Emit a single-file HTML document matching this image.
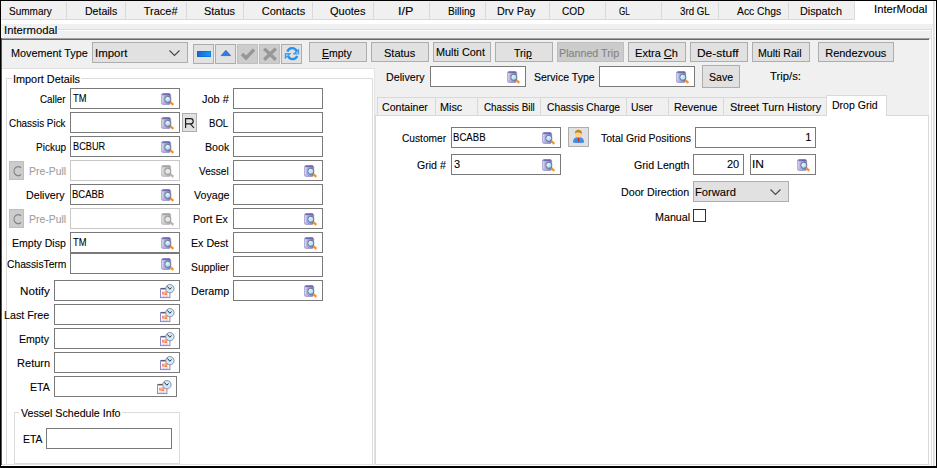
<!DOCTYPE html>
<html><head><meta charset="utf-8"><title>Intermodal</title>
<style>
html,body{margin:0;padding:0;}
body{width:937px;height:468px;overflow:hidden;background:#f0f0f0;position:relative;font-family:"Liberation Sans",sans-serif;font-size:11px;}
div,span.t,svg{position:absolute;}
span.t{white-space:nowrap;line-height:14px;height:14px;transform-origin:0 0;-webkit-text-stroke:0.1px currentColor;}
u{text-decoration:underline;}
</style></head><body>
<svg width="0" height="0" style="left:0;top:0"><defs><linearGradient id="cy" x1="0" x2="1" y1="0" y2="0"><stop offset="0" stop-color="#cacaf0"/><stop offset="0.45" stop-color="#a2a2dc"/><stop offset="1" stop-color="#7a7abe"/></linearGradient><linearGradient id="cyd" x1="0" x2="1" y1="0" y2="0"><stop offset="0" stop-color="#d6d6d6"/><stop offset="0.45" stop-color="#c2c2c2"/><stop offset="1" stop-color="#a8a8a8"/></linearGradient><radialGradient id="ln" cx="0.35" cy="0.3" r="0.8"><stop offset="0" stop-color="#e4f6ff"/><stop offset="1" stop-color="#8ed2f6"/></radialGradient></defs></svg>
<div style="left:0px;top:0px;width:937px;height:468px;background:#f0f0f0;"></div>
<div style="left:66px;top:2px;width:1px;height:18px;background:#d9d9d9;"></div>
<div style="left:125px;top:2px;width:1px;height:18px;background:#d9d9d9;"></div>
<div style="left:186px;top:2px;width:1px;height:18px;background:#d9d9d9;"></div>
<div style="left:243px;top:2px;width:1px;height:18px;background:#d9d9d9;"></div>
<div style="left:312px;top:2px;width:1px;height:18px;background:#d9d9d9;"></div>
<div style="left:373px;top:2px;width:1px;height:18px;background:#d9d9d9;"></div>
<div style="left:429px;top:2px;width:1px;height:18px;background:#d9d9d9;"></div>
<div style="left:485px;top:2px;width:1px;height:18px;background:#d9d9d9;"></div>
<div style="left:549px;top:2px;width:1px;height:18px;background:#d9d9d9;"></div>
<div style="left:605px;top:2px;width:1px;height:18px;background:#d9d9d9;"></div>
<div style="left:661px;top:2px;width:1px;height:18px;background:#d9d9d9;"></div>
<div style="left:718px;top:2px;width:1px;height:18px;background:#d9d9d9;"></div>
<div style="left:788px;top:2px;width:1px;height:18px;background:#d9d9d9;"></div>
<div style="left:1px;top:19px;width:854px;height:1px;background:#d9d9d9;"></div>
<div style="left:1px;top:20px;width:934px;height:4px;background:#ffffff;"></div>
<div style="left:855px;top:1px;width:78px;height:23px;background:#ffffff;"></div>
<div style="left:854px;top:2px;width:1px;height:18px;background:#d9d9d9;"></div>
<div style="left:933px;top:1px;width:1px;height:465px;background:#dcdcdc;"></div>
<div style="left:934px;top:1px;width:1px;height:465px;background:#e6e6e6;"></div>
<div style="left:935px;top:1px;width:1px;height:465px;background:#ffffff;"></div>
<span class="t" style="left:8.75px;top:4px;color:#000;font-size:11px;transform:scaleX(0.9108);">Summary</span>
<span class="t" style="left:84.75px;top:4px;color:#000;font-size:11px;transform:scaleX(0.9576);">Details</span>
<span class="t" style="left:143.75px;top:4px;color:#000;font-size:11px;">Trace#</span>
<span class="t" style="left:203.65px;top:4px;color:#000;font-size:11px;transform:scaleX(0.9949);">Status</span>
<span class="t" style="left:261.75px;top:4px;color:#000;font-size:11px;">Contacts</span>
<span class="t" style="left:330px;top:4px;color:#000;font-size:11px;">Quotes</span>
<span class="t" style="left:398.3px;top:4px;color:#000;font-size:11px;transform:scaleX(1.145);">I/P</span>
<span class="t" style="left:448.05px;top:4px;color:#000;font-size:11px;transform:scaleX(0.9289);">Billing</span>
<span class="t" style="left:497.05px;top:4px;color:#000;font-size:11px;transform:scaleX(0.9795);">Drv Pay</span>
<span class="t" style="left:562.1px;top:4px;color:#000;font-size:11px;transform:scaleX(0.9167);">COD</span>
<span class="t" style="left:619px;top:4px;color:#000;font-size:11px;transform:scaleX(0.7343);">GL</span>
<span class="t" style="left:680px;top:4px;color:#000;font-size:11px;transform:scaleX(0.8825);">3rd GL</span>
<span class="t" style="left:737px;top:4px;color:#000;font-size:11px;transform:scaleX(0.9404);">Acc Chgs</span>
<span class="t" style="left:800.2px;top:4px;color:#000;font-size:11px;transform:scaleX(0.981);">Dispatch</span>
<span class="t" style="left:874.3px;top:2px;color:#000;font-size:11px;transform:scaleX(1.024);">InterModal</span>
<div style="left:3px;top:29px;width:928px;height:1px;background:#dcdcdc;"></div>
<div style="left:3px;top:30px;width:928px;height:1px;background:#ffffff;"></div>
<div style="left:931px;top:29px;width:1px;height:436px;background:#dcdcdc;"></div>
<div style="left:932px;top:29px;width:1px;height:436px;background:#ffffff;"></div>
<div style="left:4px;top:24px;width:54px;height:12px;background:#f0f0f0;"></div>
<span class="t" style="left:4.3px;top:23px;color:#000;font-size:11px;transform:scaleX(1.024);">Intermodal</span>
<div style="left:1px;top:38px;width:929px;height:1px;background:#a0a0a0;"></div>
<div style="left:1px;top:39px;width:928px;height:1px;background:#696969;"></div>
<div style="left:1px;top:38px;width:1px;height:428px;background:#555555;"></div>
<div style="left:929px;top:39px;width:1px;height:426px;background:#ffffff;"></div>
<div style="left:930px;top:38px;width:1px;height:427px;background:#ffffff;"></div>
<div style="left:2px;top:464px;width:928px;height:1px;background:#e3e3e3;"></div>
<div style="left:1px;top:465px;width:930px;height:1px;background:#ffffff;"></div>
<span class="t" style="left:10.8px;top:46px;color:#000;font-size:11px;transform:scaleX(0.9836);">Movement Type</span>
<div style="left:92px;top:42px;width:96px;height:21px;background:#e1e1e1;border:1px solid #adadad;box-sizing:border-box;"></div>
<span class="t" style="left:95.2px;top:46px;color:#000;font-size:11px;transform:scaleX(1.04);">Import</span>
<svg style="left:168px;top:49px" width="13" height="8" viewBox="0 0 13 8"><path d="M1.5 1.5 L6.5 6.5 L11.5 1.5" fill="none" stroke="#444" stroke-width="1.1"/></svg>
<div style="left:193px;top:44px;width:21px;height:20px;background:#e1e1e1;border:1px solid #adadad;box-sizing:border-box;"></div>
<div style="left:215px;top:44px;width:21px;height:20px;background:#e1e1e1;border:1px solid #adadad;box-sizing:border-box;"></div>
<div style="left:237px;top:44px;width:21px;height:20px;background:#cccccc;border:1px solid #bfbfbf;box-sizing:border-box;"></div>
<div style="left:259px;top:44px;width:21px;height:20px;background:#cccccc;border:1px solid #bfbfbf;box-sizing:border-box;"></div>
<div style="left:281px;top:44px;width:21px;height:20px;background:#e1e1e1;border:1px solid #adadad;box-sizing:border-box;"></div>
<svg style="left:197px;top:51px" width="14" height="6" viewBox="0 0 14 6"><defs><linearGradient id="g1" x1="0" x2="1" y1="0" y2="0"><stop offset="0" stop-color="#1f5fd2"/><stop offset="1" stop-color="#0aa0ff"/></linearGradient></defs><rect x="0" y="0" width="14" height="6" rx="1" fill="url(#g1)" stroke="#1b50b8" stroke-width="0.8"/></svg>
<svg style="left:220px;top:49px" width="12" height="8" viewBox="0 0 12 8"><path d="M5.9 1.3 L10.6 6.6 L1.2 6.6 Z" fill="#2f7fe8" stroke="#1f58c8" stroke-width="0.7"/></svg>
<svg style="left:240px;top:47px" width="16" height="14" viewBox="0 0 16 14"><path d="M2 7 L6 11 L14 2.6" fill="none" stroke="#979797" stroke-width="3.5"/></svg>
<svg style="left:262px;top:47px" width="16" height="14" viewBox="0 0 16 14"><path d="M2.2 1.6 L13.8 12.8 M13.8 1.6 L2.2 12.8" fill="none" stroke="#979797" stroke-width="3.4"/></svg>
<svg style="left:284px;top:46px" width="16" height="16" viewBox="0 0 16 16"><path d="M3.4 5.6 A4.9 4.9 0 0 1 12.6 5.2" fill="none" stroke="#2290f4" stroke-width="2.3"/><path d="M14.7 3.2 L14.7 8.1 L9.2 8.1 Z" fill="#3aa0fa" stroke="#1d84ec" stroke-width="0.6"/><path d="M13.6 5.6 L13.6 7.4 L11.6 7.4 Z" fill="#bfe3ff"/><path d="M4.2 10.2 A4.9 4.9 0 0 0 13.2 10" fill="none" stroke="#2290f4" stroke-width="2.3"/><path d="M1.2 7.5 L1.2 12.6 L6.8 7.5 Z" fill="#3aa0fa" stroke="#1d84ec" stroke-width="0.6"/><path d="M2.2 8.4 L2.2 10.4 L4.4 8.4 Z" fill="#bfe3ff"/></svg>
<div style="left:309px;top:42px;width:58px;height:20px;background:#e1e1e1;border:1px solid #adadad;box-sizing:border-box;"></div>
<span class="t" style="left:322.1px;top:46px;color:#000;font-size:11px;transform:scaleX(0.95);"><u>E</u>mpty</span>
<div style="left:371px;top:42px;width:58px;height:20px;background:#e1e1e1;border:1px solid #adadad;box-sizing:border-box;"></div>
<span class="t" style="left:384px;top:46px;color:#000;font-size:11px;">Status</span>
<div style="left:433px;top:42px;width:58px;height:20px;background:#e1e1e1;border:1px solid #adadad;box-sizing:border-box;"></div>
<span class="t" style="left:436.3px;top:45px;color:#000;font-size:11px;transform:scaleX(0.9878);">Multi Cont</span>
<div style="left:495px;top:42px;width:58px;height:20px;background:#e1e1e1;border:1px solid #adadad;box-sizing:border-box;"></div>
<span class="t" style="left:514.1px;top:46px;color:#000;font-size:11px;transform:scaleX(0.9579);">Tri<u>p</u></span>
<div style="left:557px;top:42px;width:67px;height:20px;background:#cccccc;border:1px solid #bfbfbf;box-sizing:border-box;"></div>
<span class="t" style="left:559.3px;top:46px;color:#838383;font-size:11px;transform:scaleX(0.9738);">Planned Trip</span>
<div style="left:628px;top:42px;width:58px;height:20px;background:#e1e1e1;border:1px solid #adadad;box-sizing:border-box;"></div>
<span class="t" style="left:635.1px;top:46px;color:#000;font-size:11px;">Extra <u>C</u>h</span>
<div style="left:690px;top:42px;width:58px;height:20px;background:#e1e1e1;border:1px solid #adadad;box-sizing:border-box;"></div>
<span class="t" style="left:697.2px;top:46px;color:#000;font-size:11px;transform:scaleX(1.0845);">De-stuff</span>
<div style="left:752px;top:42px;width:58px;height:20px;background:#e1e1e1;border:1px solid #adadad;box-sizing:border-box;"></div>
<span class="t" style="left:758.2px;top:46px;color:#000;font-size:11px;transform:scaleX(0.9636);">Multi Rail</span>
<div style="left:818px;top:42px;width:76px;height:20px;background:#e1e1e1;border:1px solid #adadad;box-sizing:border-box;"></div>
<span class="t" style="left:825.2px;top:46px;color:#000;font-size:11px;">Rendezvous</span>
<span class="t" style="left:386.3px;top:70px;color:#000;font-size:11px;transform:scaleX(0.97);">Delivery</span>
<div style="left:430px;top:66px;width:96px;height:21px;background:#fff;border:1px solid #7a7a7a;box-sizing:border-box;"></div>
<svg style="left:507px;top:71px" width="14" height="14" viewBox="0 0 14 14"><rect x="0.4" y="0.5" width="9.3" height="11" rx="1.7" fill="url(#cy)" stroke="#8484c4" stroke-width="0.6"/><rect x="1.2" y="0.5" width="7.8" height="1.5" rx="0.7" fill="#5a5aa4" opacity="0.75"/><path d="M0.9 3.4h1.4M0.9 5.6h1.4M0.9 7.8h1.4" stroke="#fff" stroke-width="0.7" opacity="0.7"/><line x1="9.6" y1="9.2" x2="12.3" y2="11.9" stroke="#ff9020" stroke-width="2.3"/><circle cx="6.8" cy="6.3" r="3.05" fill="url(#ln)" stroke="#686874" stroke-width="0.85"/></svg>
<span class="t" style="left:533.75px;top:70px;color:#000;font-size:11px;transform:scaleX(0.9557);">Service Type</span>
<div style="left:599px;top:66px;width:96px;height:21px;background:#fff;border:1px solid #7a7a7a;box-sizing:border-box;"></div>
<svg style="left:676px;top:71px" width="14" height="14" viewBox="0 0 14 14"><rect x="0.4" y="0.5" width="9.3" height="11" rx="1.7" fill="url(#cy)" stroke="#8484c4" stroke-width="0.6"/><rect x="1.2" y="0.5" width="7.8" height="1.5" rx="0.7" fill="#5a5aa4" opacity="0.75"/><path d="M0.9 3.4h1.4M0.9 5.6h1.4M0.9 7.8h1.4" stroke="#fff" stroke-width="0.7" opacity="0.7"/><line x1="9.6" y1="9.2" x2="12.3" y2="11.9" stroke="#ff9020" stroke-width="2.3"/><circle cx="6.8" cy="6.3" r="3.05" fill="url(#ln)" stroke="#686874" stroke-width="0.85"/></svg>
<div style="left:702px;top:65px;width:38px;height:23px;background:#e1e1e1;border:1px solid #adadad;box-sizing:border-box;"></div>
<span class="t" style="left:708.75px;top:70px;color:#000;font-size:11px;transform:scaleX(0.96);">Save</span>
<span class="t" style="left:770px;top:69px;color:#000;font-size:11px;transform:scaleX(1.0276);">Trip/s:</span>
<div style="left:2px;top:68px;width:373px;height:396px;background:#ffffff;"></div>
<div style="left:2px;top:68px;width:373px;height:1px;background:#e0e0e0;"></div>
<div style="left:374px;top:68px;width:1px;height:396px;background:#e3e3e3;"></div>
<div style="left:6px;top:78px;width:367px;height:386px;border:1px solid #dcdcdc;box-sizing:border-box;border-bottom:none;"></div>
<div style="left:12px;top:72px;width:69px;height:12px;background:#ffffff;"></div>
<span class="t" style="left:13.2px;top:72px;color:#000;font-size:11px;transform:scaleX(0.9881);">Import Details</span>
<span class="t" style="left:40px;top:92px;color:#000;font-size:11px;transform:scaleX(0.89);">Caller</span>
<div style="left:70px;top:88px;width:110px;height:21px;background:#fff;border:1px solid #7a7a7a;box-sizing:border-box;"></div>
<svg style="left:161px;top:93px" width="14" height="14" viewBox="0 0 14 14"><rect x="0.4" y="0.5" width="9.3" height="11" rx="1.7" fill="url(#cy)" stroke="#8484c4" stroke-width="0.6"/><rect x="1.2" y="0.5" width="7.8" height="1.5" rx="0.7" fill="#5a5aa4" opacity="0.75"/><path d="M0.9 3.4h1.4M0.9 5.6h1.4M0.9 7.8h1.4" stroke="#fff" stroke-width="0.7" opacity="0.7"/><line x1="9.6" y1="9.2" x2="12.3" y2="11.9" stroke="#ff9020" stroke-width="2.3"/><circle cx="6.8" cy="6.3" r="3.05" fill="url(#ln)" stroke="#686874" stroke-width="0.85"/></svg>
<span class="t" style="left:73.0px;top:91px;color:#000;font-size:11px;transform:scaleX(0.8495);">TM</span>
<span class="t" style="left:9.1px;top:116px;color:#000;font-size:11px;transform:scaleX(0.8975);">Chassis Pick</span>
<div style="left:70px;top:112px;width:110px;height:21px;background:#fff;border:1px solid #7a7a7a;box-sizing:border-box;"></div>
<svg style="left:161px;top:117px" width="14" height="14" viewBox="0 0 14 14"><rect x="0.4" y="0.5" width="9.3" height="11" rx="1.7" fill="url(#cy)" stroke="#8484c4" stroke-width="0.6"/><rect x="1.2" y="0.5" width="7.8" height="1.5" rx="0.7" fill="#5a5aa4" opacity="0.75"/><path d="M0.9 3.4h1.4M0.9 5.6h1.4M0.9 7.8h1.4" stroke="#fff" stroke-width="0.7" opacity="0.7"/><line x1="9.6" y1="9.2" x2="12.3" y2="11.9" stroke="#ff9020" stroke-width="2.3"/><circle cx="6.8" cy="6.3" r="3.05" fill="url(#ln)" stroke="#686874" stroke-width="0.85"/></svg>
<span class="t" style="left:35.66px;top:140px;color:#000;font-size:11px;transform:scaleX(0.9103);">Pickup</span>
<div style="left:70px;top:136px;width:110px;height:21px;background:#fff;border:1px solid #7a7a7a;box-sizing:border-box;"></div>
<svg style="left:161px;top:141px" width="14" height="14" viewBox="0 0 14 14"><rect x="0.4" y="0.5" width="9.3" height="11" rx="1.7" fill="url(#cy)" stroke="#8484c4" stroke-width="0.6"/><rect x="1.2" y="0.5" width="7.8" height="1.5" rx="0.7" fill="#5a5aa4" opacity="0.75"/><path d="M0.9 3.4h1.4M0.9 5.6h1.4M0.9 7.8h1.4" stroke="#fff" stroke-width="0.7" opacity="0.7"/><line x1="9.6" y1="9.2" x2="12.3" y2="11.9" stroke="#ff9020" stroke-width="2.3"/><circle cx="6.8" cy="6.3" r="3.05" fill="url(#ln)" stroke="#686874" stroke-width="0.85"/></svg>
<span class="t" style="left:73.0px;top:139px;color:#000;font-size:11px;transform:scaleX(0.8358);">BCBUR</span>
<span class="t" style="left:29.3px;top:164px;color:#a0a0a0;font-size:11px;transform:scaleX(0.9474);">Pre-Pull</span>
<div style="left:70px;top:160px;width:110px;height:21px;background:#fff;border:1px solid #c8c8c8;box-sizing:border-box;"></div>
<svg style="left:161px;top:165px" width="14" height="14" viewBox="0 0 14 14"><rect x="0.4" y="0.5" width="9.3" height="11" rx="1.7" fill="url(#cyd)" stroke="#b0b0b0" stroke-width="0.6"/><rect x="1.2" y="0.5" width="7.8" height="1.5" rx="0.7" fill="#9c9c9c" opacity="0.75"/><path d="M0.9 3.4h1.4M0.9 5.6h1.4M0.9 7.8h1.4" stroke="#fff" stroke-width="0.7" opacity="0.7"/><line x1="9.6" y1="9.2" x2="12.3" y2="11.9" stroke="#b4b4b4" stroke-width="2.3"/><circle cx="6.8" cy="6.3" r="3.05" fill="#e9e9e9" stroke="#8a8a8a" stroke-width="0.85"/></svg>
<div style="left:9px;top:161px;width:15px;height:19px;background:#cccccc;border:1px solid #bfbfbf;box-sizing:border-box;"></div>
<svg style="left:12px;top:165px" width="11" height="12" viewBox="0 0 11 12"><path d="M9 2.9 A4.1 4.6 0 1 0 9 9.5" fill="none" stroke="#808080" stroke-width="1.15"/></svg>
<span class="t" style="left:26.3px;top:188px;color:#000;font-size:11px;transform:scaleX(0.97);">Delivery</span>
<div style="left:70px;top:184px;width:110px;height:21px;background:#fff;border:1px solid #7a7a7a;box-sizing:border-box;"></div>
<svg style="left:161px;top:189px" width="14" height="14" viewBox="0 0 14 14"><rect x="0.4" y="0.5" width="9.3" height="11" rx="1.7" fill="url(#cy)" stroke="#8484c4" stroke-width="0.6"/><rect x="1.2" y="0.5" width="7.8" height="1.5" rx="0.7" fill="#5a5aa4" opacity="0.75"/><path d="M0.9 3.4h1.4M0.9 5.6h1.4M0.9 7.8h1.4" stroke="#fff" stroke-width="0.7" opacity="0.7"/><line x1="9.6" y1="9.2" x2="12.3" y2="11.9" stroke="#ff9020" stroke-width="2.3"/><circle cx="6.8" cy="6.3" r="3.05" fill="url(#ln)" stroke="#686874" stroke-width="0.85"/></svg>
<span class="t" style="left:72.2px;top:187px;color:#000;font-size:11px;transform:scaleX(0.8611);">BCABB</span>
<span class="t" style="left:29.3px;top:212px;color:#a0a0a0;font-size:11px;transform:scaleX(0.9474);">Pre-Pull</span>
<div style="left:70px;top:208px;width:110px;height:21px;background:#fff;border:1px solid #c8c8c8;box-sizing:border-box;"></div>
<svg style="left:161px;top:213px" width="14" height="14" viewBox="0 0 14 14"><rect x="0.4" y="0.5" width="9.3" height="11" rx="1.7" fill="url(#cyd)" stroke="#b0b0b0" stroke-width="0.6"/><rect x="1.2" y="0.5" width="7.8" height="1.5" rx="0.7" fill="#9c9c9c" opacity="0.75"/><path d="M0.9 3.4h1.4M0.9 5.6h1.4M0.9 7.8h1.4" stroke="#fff" stroke-width="0.7" opacity="0.7"/><line x1="9.6" y1="9.2" x2="12.3" y2="11.9" stroke="#b4b4b4" stroke-width="2.3"/><circle cx="6.8" cy="6.3" r="3.05" fill="#e9e9e9" stroke="#8a8a8a" stroke-width="0.85"/></svg>
<div style="left:9px;top:209px;width:15px;height:19px;background:#cccccc;border:1px solid #bfbfbf;box-sizing:border-box;"></div>
<svg style="left:12px;top:213px" width="11" height="12" viewBox="0 0 11 12"><path d="M9 2.9 A4.1 4.6 0 1 0 9 9.5" fill="none" stroke="#808080" stroke-width="1.15"/></svg>
<span class="t" style="left:12.2px;top:236px;color:#000;font-size:11px;transform:scaleX(0.9565);">Empty Disp</span>
<div style="left:70px;top:232px;width:110px;height:21px;background:#fff;border:1px solid #7a7a7a;box-sizing:border-box;"></div>
<svg style="left:161px;top:237px" width="14" height="14" viewBox="0 0 14 14"><rect x="0.4" y="0.5" width="9.3" height="11" rx="1.7" fill="url(#cy)" stroke="#8484c4" stroke-width="0.6"/><rect x="1.2" y="0.5" width="7.8" height="1.5" rx="0.7" fill="#5a5aa4" opacity="0.75"/><path d="M0.9 3.4h1.4M0.9 5.6h1.4M0.9 7.8h1.4" stroke="#fff" stroke-width="0.7" opacity="0.7"/><line x1="9.6" y1="9.2" x2="12.3" y2="11.9" stroke="#ff9020" stroke-width="2.3"/><circle cx="6.8" cy="6.3" r="3.05" fill="url(#ln)" stroke="#686874" stroke-width="0.85"/></svg>
<span class="t" style="left:73.0px;top:235px;color:#000;font-size:11px;transform:scaleX(0.8495);">TM</span>
<span class="t" style="left:6.75px;top:257px;color:#000;font-size:11px;transform:scaleX(0.9335);">ChassisTerm</span>
<div style="left:70px;top:253px;width:110px;height:21px;background:#fff;border:1px solid #7a7a7a;box-sizing:border-box;"></div>
<svg style="left:161px;top:258px" width="14" height="14" viewBox="0 0 14 14"><rect x="0.4" y="0.5" width="9.3" height="11" rx="1.7" fill="url(#cy)" stroke="#8484c4" stroke-width="0.6"/><rect x="1.2" y="0.5" width="7.8" height="1.5" rx="0.7" fill="#5a5aa4" opacity="0.75"/><path d="M0.9 3.4h1.4M0.9 5.6h1.4M0.9 7.8h1.4" stroke="#fff" stroke-width="0.7" opacity="0.7"/><line x1="9.6" y1="9.2" x2="12.3" y2="11.9" stroke="#ff9020" stroke-width="2.3"/><circle cx="6.8" cy="6.3" r="3.05" fill="url(#ln)" stroke="#686874" stroke-width="0.85"/></svg>
<div style="left:182px;top:113px;width:15px;height:19px;background:#e1e1e1;border:1px solid #adadad;box-sizing:border-box;"></div>
<svg style="left:184px;top:117px" width="12" height="12" viewBox="0 0 12 12"><path d="M1.6 11 V1.6 H6.6 A2.6 2.6 0 0 1 6.6 6.8 H1.6 M6.4 6.8 L10 11" fill="none" stroke="#1a1a1a" stroke-width="1.15"/></svg>
<span class="t" style="left:20.2px;top:284px;color:#000;font-size:11px;transform:scaleX(1.0593);">Notify</span>
<div style="left:54px;top:280px;width:126px;height:21px;background:#fff;border:1px solid #7a7a7a;box-sizing:border-box;"></div>
<svg style="left:160px;top:283px" width="15" height="16" viewBox="0 0 15 16"><rect x="0.5" y="5.6" width="9.4" height="9" fill="#ffffff" stroke="#8c88cc" stroke-width="1"/><rect x="1.2" y="4.9" width="5" height="1.5" fill="#5a5a60"/><rect x="2.3" y="8.6" width="1.3" height="3" fill="#ff5a20"/><path d="M4.4 8.9h2.6v1.3h-2.4v1.3h2.8" fill="none" stroke="#ff6a30" stroke-width="0.9"/><rect x="1.6" y="12.7" width="7" height="0.9" fill="#bcbce6"/><circle cx="9.9" cy="5.7" r="4.2" fill="#cdeafb" stroke="#8a8698" stroke-width="0.9"/><path d="M7.3 3.4 L9.8 6.2 L11.5 4.5" fill="none" stroke="#2a2a30" stroke-width="0.95"/></svg>
<span class="t" style="left:4.3px;top:308px;color:#000;font-size:11px;transform:scaleX(0.9739);">Last Free</span>
<div style="left:54px;top:304px;width:126px;height:21px;background:#fff;border:1px solid #7a7a7a;box-sizing:border-box;"></div>
<svg style="left:160px;top:307px" width="15" height="16" viewBox="0 0 15 16"><rect x="0.5" y="5.6" width="9.4" height="9" fill="#ffffff" stroke="#8c88cc" stroke-width="1"/><rect x="1.2" y="4.9" width="5" height="1.5" fill="#5a5a60"/><rect x="2.3" y="8.6" width="1.3" height="3" fill="#ff5a20"/><path d="M4.4 8.9h2.6v1.3h-2.4v1.3h2.8" fill="none" stroke="#ff6a30" stroke-width="0.9"/><rect x="1.6" y="12.7" width="7" height="0.9" fill="#bcbce6"/><circle cx="9.9" cy="5.7" r="4.2" fill="#cdeafb" stroke="#8a8698" stroke-width="0.9"/><path d="M7.3 3.4 L9.8 6.2 L11.5 4.5" fill="none" stroke="#2a2a30" stroke-width="0.95"/></svg>
<span class="t" style="left:19.3px;top:332px;color:#000;font-size:11px;transform:scaleX(0.9613);">Empty</span>
<div style="left:54px;top:328px;width:126px;height:21px;background:#fff;border:1px solid #7a7a7a;box-sizing:border-box;"></div>
<svg style="left:160px;top:331px" width="15" height="16" viewBox="0 0 15 16"><rect x="0.5" y="5.6" width="9.4" height="9" fill="#ffffff" stroke="#8c88cc" stroke-width="1"/><rect x="1.2" y="4.9" width="5" height="1.5" fill="#5a5a60"/><rect x="2.3" y="8.6" width="1.3" height="3" fill="#ff5a20"/><path d="M4.4 8.9h2.6v1.3h-2.4v1.3h2.8" fill="none" stroke="#ff6a30" stroke-width="0.9"/><rect x="1.6" y="12.7" width="7" height="0.9" fill="#bcbce6"/><circle cx="9.9" cy="5.7" r="4.2" fill="#cdeafb" stroke="#8a8698" stroke-width="0.9"/><path d="M7.3 3.4 L9.8 6.2 L11.5 4.5" fill="none" stroke="#2a2a30" stroke-width="0.95"/></svg>
<span class="t" style="left:17.1px;top:356px;color:#000;font-size:11px;">Return</span>
<div style="left:54px;top:352px;width:126px;height:21px;background:#fff;border:1px solid #7a7a7a;box-sizing:border-box;"></div>
<svg style="left:160px;top:355px" width="15" height="16" viewBox="0 0 15 16"><rect x="0.5" y="5.6" width="9.4" height="9" fill="#ffffff" stroke="#8c88cc" stroke-width="1"/><rect x="1.2" y="4.9" width="5" height="1.5" fill="#5a5a60"/><rect x="2.3" y="8.6" width="1.3" height="3" fill="#ff5a20"/><path d="M4.4 8.9h2.6v1.3h-2.4v1.3h2.8" fill="none" stroke="#ff6a30" stroke-width="0.9"/><rect x="1.6" y="12.7" width="7" height="0.9" fill="#bcbce6"/><circle cx="9.9" cy="5.7" r="4.2" fill="#cdeafb" stroke="#8a8698" stroke-width="0.9"/><path d="M7.3 3.4 L9.8 6.2 L11.5 4.5" fill="none" stroke="#2a2a30" stroke-width="0.95"/></svg>
<span class="t" style="left:30.2px;top:380px;color:#000;font-size:11px;transform:scaleX(0.96);">ETA</span>
<div style="left:54px;top:376px;width:123px;height:21px;background:#fff;border:1px solid #7a7a7a;box-sizing:border-box;"></div>
<svg style="left:157px;top:379px" width="15" height="16" viewBox="0 0 15 16"><rect x="0.5" y="5.6" width="9.4" height="9" fill="#ffffff" stroke="#8c88cc" stroke-width="1"/><rect x="1.2" y="4.9" width="5" height="1.5" fill="#5a5a60"/><rect x="2.3" y="8.6" width="1.3" height="3" fill="#ff5a20"/><path d="M4.4 8.9h2.6v1.3h-2.4v1.3h2.8" fill="none" stroke="#ff6a30" stroke-width="0.9"/><rect x="1.6" y="12.7" width="7" height="0.9" fill="#bcbce6"/><circle cx="9.9" cy="5.7" r="4.2" fill="#cdeafb" stroke="#8a8698" stroke-width="0.9"/><path d="M7.3 3.4 L9.8 6.2 L11.5 4.5" fill="none" stroke="#2a2a30" stroke-width="0.95"/></svg>
<span class="t" style="left:202px;top:92px;color:#000;font-size:11px;">Job #</span>
<div style="left:233px;top:88px;width:90px;height:21px;background:#fff;border:1px solid #7a7a7a;box-sizing:border-box;"></div>
<span class="t" style="left:209.3px;top:116px;color:#000;font-size:11px;transform:scaleX(0.8727);">BOL</span>
<div style="left:233px;top:112px;width:90px;height:21px;background:#fff;border:1px solid #7a7a7a;box-sizing:border-box;"></div>
<span class="t" style="left:205.2px;top:140px;color:#000;font-size:11px;transform:scaleX(0.9667);">Book</span>
<div style="left:233px;top:136px;width:90px;height:21px;background:#fff;border:1px solid #7a7a7a;box-sizing:border-box;"></div>
<span class="t" style="left:199.1px;top:164px;color:#000;font-size:11px;transform:scaleX(0.9152);">Vessel</span>
<div style="left:233px;top:160px;width:90px;height:21px;background:#fff;border:1px solid #7a7a7a;box-sizing:border-box;"></div>
<svg style="left:304px;top:165px" width="14" height="14" viewBox="0 0 14 14"><rect x="0.4" y="0.5" width="9.3" height="11" rx="1.7" fill="url(#cy)" stroke="#8484c4" stroke-width="0.6"/><rect x="1.2" y="0.5" width="7.8" height="1.5" rx="0.7" fill="#5a5aa4" opacity="0.75"/><path d="M0.9 3.4h1.4M0.9 5.6h1.4M0.9 7.8h1.4" stroke="#fff" stroke-width="0.7" opacity="0.7"/><line x1="9.6" y1="9.2" x2="12.3" y2="11.9" stroke="#ff9020" stroke-width="2.3"/><circle cx="6.8" cy="6.3" r="3.05" fill="url(#ln)" stroke="#686874" stroke-width="0.85"/></svg>
<span class="t" style="left:193.75px;top:188px;color:#000;font-size:11px;transform:scaleX(0.9669);">Voyage</span>
<div style="left:233px;top:184px;width:90px;height:21px;background:#fff;border:1px solid #7a7a7a;box-sizing:border-box;"></div>
<span class="t" style="left:193.3px;top:212px;color:#000;font-size:11px;transform:scaleX(0.9667);">Port Ex</span>
<div style="left:233px;top:208px;width:90px;height:21px;background:#fff;border:1px solid #7a7a7a;box-sizing:border-box;"></div>
<svg style="left:304px;top:213px" width="14" height="14" viewBox="0 0 14 14"><rect x="0.4" y="0.5" width="9.3" height="11" rx="1.7" fill="url(#cy)" stroke="#8484c4" stroke-width="0.6"/><rect x="1.2" y="0.5" width="7.8" height="1.5" rx="0.7" fill="#5a5aa4" opacity="0.75"/><path d="M0.9 3.4h1.4M0.9 5.6h1.4M0.9 7.8h1.4" stroke="#fff" stroke-width="0.7" opacity="0.7"/><line x1="9.6" y1="9.2" x2="12.3" y2="11.9" stroke="#ff9020" stroke-width="2.3"/><circle cx="6.8" cy="6.3" r="3.05" fill="url(#ln)" stroke="#686874" stroke-width="0.85"/></svg>
<span class="t" style="left:191.3px;top:236px;color:#000;font-size:11px;transform:scaleX(0.9684);">Ex Dest</span>
<div style="left:233px;top:232px;width:90px;height:21px;background:#fff;border:1px solid #7a7a7a;box-sizing:border-box;"></div>
<svg style="left:304px;top:237px" width="14" height="14" viewBox="0 0 14 14"><rect x="0.4" y="0.5" width="9.3" height="11" rx="1.7" fill="url(#cy)" stroke="#8484c4" stroke-width="0.6"/><rect x="1.2" y="0.5" width="7.8" height="1.5" rx="0.7" fill="#5a5aa4" opacity="0.75"/><path d="M0.9 3.4h1.4M0.9 5.6h1.4M0.9 7.8h1.4" stroke="#fff" stroke-width="0.7" opacity="0.7"/><line x1="9.6" y1="9.2" x2="12.3" y2="11.9" stroke="#ff9020" stroke-width="2.3"/><circle cx="6.8" cy="6.3" r="3.05" fill="url(#ln)" stroke="#686874" stroke-width="0.85"/></svg>
<span class="t" style="left:191px;top:260px;color:#000;font-size:11px;transform:scaleX(0.9415);">Supplier</span>
<div style="left:233px;top:256px;width:90px;height:21px;background:#fff;border:1px solid #7a7a7a;box-sizing:border-box;"></div>
<span class="t" style="left:191.2px;top:284px;color:#000;font-size:11px;transform:scaleX(0.9789);">Deramp</span>
<div style="left:233px;top:280px;width:90px;height:21px;background:#fff;border:1px solid #7a7a7a;box-sizing:border-box;"></div>
<svg style="left:304px;top:285px" width="14" height="14" viewBox="0 0 14 14"><rect x="0.4" y="0.5" width="9.3" height="11" rx="1.7" fill="url(#cy)" stroke="#8484c4" stroke-width="0.6"/><rect x="1.2" y="0.5" width="7.8" height="1.5" rx="0.7" fill="#5a5aa4" opacity="0.75"/><path d="M0.9 3.4h1.4M0.9 5.6h1.4M0.9 7.8h1.4" stroke="#fff" stroke-width="0.7" opacity="0.7"/><line x1="9.6" y1="9.2" x2="12.3" y2="11.9" stroke="#ff9020" stroke-width="2.3"/><circle cx="6.8" cy="6.3" r="3.05" fill="url(#ln)" stroke="#686874" stroke-width="0.85"/></svg>
<div style="left:14px;top:412px;width:166px;height:52px;border:1px solid #dcdcdc;box-sizing:border-box;"></div>
<div style="left:19px;top:406px;width:103px;height:12px;background:#ffffff;"></div>
<span class="t" style="left:21px;top:406px;color:#000;font-size:11px;transform:scaleX(0.9687);">Vessel Schedule Info</span>
<span class="t" style="left:22.96px;top:432px;color:#000;font-size:11px;transform:scaleX(0.944);">ETA</span>
<div style="left:46px;top:428px;width:126px;height:21px;background:#fff;border:1px solid #7a7a7a;box-sizing:border-box;"></div>
<div style="left:377px;top:97px;width:450px;height:1px;background:#d9d9d9;"></div>
<div style="left:377px;top:97px;width:1px;height:19px;background:#d9d9d9;"></div>
<div style="left:435px;top:97px;width:1px;height:19px;background:#d9d9d9;"></div>
<div style="left:477px;top:97px;width:1px;height:19px;background:#d9d9d9;"></div>
<div style="left:540px;top:97px;width:1px;height:19px;background:#d9d9d9;"></div>
<div style="left:626px;top:97px;width:1px;height:19px;background:#d9d9d9;"></div>
<div style="left:668px;top:97px;width:1px;height:19px;background:#d9d9d9;"></div>
<div style="left:723px;top:97px;width:1px;height:19px;background:#d9d9d9;"></div>
<div style="left:375px;top:115px;width:554px;height:350px;background:#ffffff;border:1px solid #d9d9d9;box-sizing:border-box;"></div>
<div style="left:826px;top:95px;width:61px;height:21px;background:#ffffff;border:1px solid #d9d9d9;box-sizing:border-box;border-bottom:none;"></div>
<span class="t" style="left:382.1px;top:100px;color:#000;font-size:11px;transform:scaleX(0.9622);">Container</span>
<span class="t" style="left:440.2px;top:100px;color:#000;font-size:11px;transform:scaleX(0.9831);">Misc</span>
<span class="t" style="left:483.75px;top:100px;color:#000;font-size:11px;transform:scaleX(0.8932);">Chassis Bill</span>
<span class="t" style="left:546.75px;top:100px;color:#000;font-size:11px;transform:scaleX(0.9335);">Chassis Charge</span>
<span class="t" style="left:631.3px;top:100px;color:#000;font-size:11px;transform:scaleX(0.9391);">User</span>
<span class="t" style="left:674.1px;top:100px;color:#000;font-size:11px;transform:scaleX(0.9828);">Revenue</span>
<span class="t" style="left:729.75px;top:100px;color:#000;font-size:11px;transform:scaleX(0.9935);">Street Turn History</span>
<span class="t" style="left:832.3px;top:98px;color:#000;font-size:11px;transform:scaleX(0.9574);">Drop Grid</span>
<span class="t" style="left:401.75px;top:131px;color:#000;font-size:11px;transform:scaleX(0.925);">Customer</span>
<div style="left:451px;top:127px;width:110px;height:21px;background:#fff;border:1px solid #7a7a7a;box-sizing:border-box;"></div>
<svg style="left:542px;top:132px" width="14" height="14" viewBox="0 0 14 14"><rect x="0.4" y="0.5" width="9.3" height="11" rx="1.7" fill="url(#cy)" stroke="#8484c4" stroke-width="0.6"/><rect x="1.2" y="0.5" width="7.8" height="1.5" rx="0.7" fill="#5a5aa4" opacity="0.75"/><path d="M0.9 3.4h1.4M0.9 5.6h1.4M0.9 7.8h1.4" stroke="#fff" stroke-width="0.7" opacity="0.7"/><line x1="9.6" y1="9.2" x2="12.3" y2="11.9" stroke="#ff9020" stroke-width="2.3"/><circle cx="6.8" cy="6.3" r="3.05" fill="url(#ln)" stroke="#686874" stroke-width="0.85"/></svg>
<span class="t" style="left:453.2px;top:130px;color:#000;font-size:11px;transform:scaleX(0.8728);">BCABB</span>
<div style="left:568px;top:127px;width:21px;height:20px;background:#e1e1e1;border:1px solid #adadad;box-sizing:border-box;"></div>
<svg style="left:572px;top:129px" width="13" height="14" viewBox="0 0 13 14"><path d="M1 13.4 C0.8 10 3 8 6.5 8 C10 8 12.2 10 12 13.4 C10 14.4 3 14.4 1 13.4 Z" fill="#3f8fe6"/><circle cx="6.5" cy="5.6" r="3.2" fill="#ffd08e"/><path d="M2.9 5.2 C2.6 1.6 5 0.6 6.8 0.8 C9 1 10.4 2.6 10 5.2 C9 3.8 6.5 3.6 5 3.6 C3.8 3.8 3.2 4.4 2.9 5.2 Z" fill="#c08a1e"/><path d="M6 8.6 L7 8.6 L7.4 12 L6.5 13 L5.6 12 Z" fill="#e8281e"/></svg>
<span class="t" style="left:417.1px;top:158px;color:#000;font-size:11px;transform:scaleX(0.96);">Grid #</span>
<div style="left:451px;top:154px;width:110px;height:21px;background:#fff;border:1px solid #7a7a7a;box-sizing:border-box;"></div>
<svg style="left:542px;top:159px" width="14" height="14" viewBox="0 0 14 14"><rect x="0.4" y="0.5" width="9.3" height="11" rx="1.7" fill="url(#cy)" stroke="#8484c4" stroke-width="0.6"/><rect x="1.2" y="0.5" width="7.8" height="1.5" rx="0.7" fill="#5a5aa4" opacity="0.75"/><path d="M0.9 3.4h1.4M0.9 5.6h1.4M0.9 7.8h1.4" stroke="#fff" stroke-width="0.7" opacity="0.7"/><line x1="9.6" y1="9.2" x2="12.3" y2="11.9" stroke="#ff9020" stroke-width="2.3"/><circle cx="6.8" cy="6.3" r="3.05" fill="url(#ln)" stroke="#686874" stroke-width="0.85"/></svg>
<span class="t" style="left:454px;top:157px;color:#000;font-size:11px;">3</span>
<span class="t" style="left:601px;top:131px;color:#000;font-size:11px;transform:scaleX(0.9495);">Total Grid Positions</span>
<div style="left:695px;top:127px;width:121px;height:21px;background:#fff;border:1px solid #7a7a7a;box-sizing:border-box;"></div>
<span class="t" style="left:805.2px;top:130px;color:#000;font-size:11px;">1</span>
<span class="t" style="left:634.1px;top:158px;color:#000;font-size:11px;transform:scaleX(0.9649);">Grid Length</span>
<div style="left:693px;top:154px;width:51px;height:21px;background:#fff;border:1px solid #7a7a7a;box-sizing:border-box;"></div>
<span class="t" style="left:727px;top:157px;color:#000;font-size:11px;">20</span>
<div style="left:750px;top:154px;width:66px;height:21px;background:#fff;border:1px solid #7a7a7a;box-sizing:border-box;"></div>
<svg style="left:797px;top:159px" width="14" height="14" viewBox="0 0 14 14"><rect x="0.4" y="0.5" width="9.3" height="11" rx="1.7" fill="url(#cy)" stroke="#8484c4" stroke-width="0.6"/><rect x="1.2" y="0.5" width="7.8" height="1.5" rx="0.7" fill="#5a5aa4" opacity="0.75"/><path d="M0.9 3.4h1.4M0.9 5.6h1.4M0.9 7.8h1.4" stroke="#fff" stroke-width="0.7" opacity="0.7"/><line x1="9.6" y1="9.2" x2="12.3" y2="11.9" stroke="#ff9020" stroke-width="2.3"/><circle cx="6.8" cy="6.3" r="3.05" fill="url(#ln)" stroke="#686874" stroke-width="0.85"/></svg>
<span class="t" style="left:752.2px;top:157px;color:#000;font-size:11px;transform:scaleX(1.0889);">IN</span>
<span class="t" style="left:620.96px;top:185px;color:#000;font-size:11px;transform:scaleX(0.9703);">Door Direction</span>
<div style="left:693px;top:181px;width:96px;height:21px;background:#e1e1e1;border:1px solid #adadad;box-sizing:border-box;"></div>
<span class="t" style="left:695.2px;top:185px;color:#000;font-size:11px;transform:scaleX(1.0125);">Forward</span>
<svg style="left:769px;top:188px" width="13" height="8" viewBox="0 0 13 8"><path d="M1.5 1.5 L6.5 6.5 L11.5 1.5" fill="none" stroke="#444" stroke-width="1.1"/></svg>
<span class="t" style="left:654.96px;top:210px;color:#000;font-size:11px;transform:scaleX(0.9749);">Manual</span>
<div style="left:693px;top:209px;width:13px;height:13px;background:#fff;border:1px solid #333;box-sizing:border-box;"></div>
<div style="left:0px;top:0px;width:937px;height:1px;background:#000;"></div>
<div style="left:0px;top:0px;width:1px;height:468px;background:#000;"></div>
<div style="left:936px;top:0px;width:1px;height:468px;background:#000;"></div>
<div style="left:0px;top:466px;width:937px;height:2px;background:#000;"></div>
</body></html>
